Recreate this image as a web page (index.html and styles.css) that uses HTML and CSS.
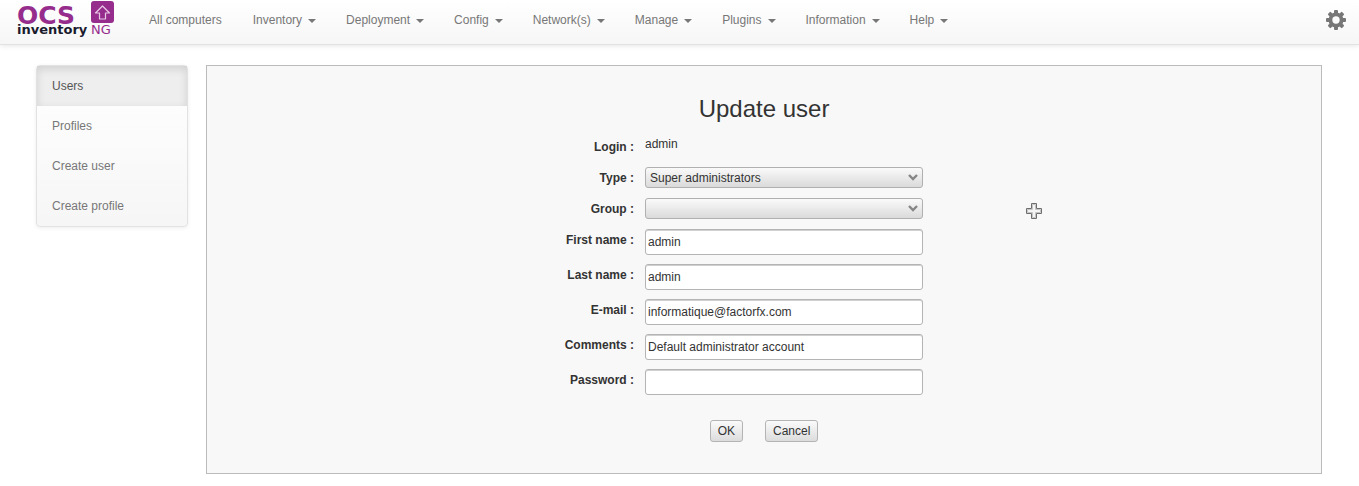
FILE: index.html
```html
<!DOCTYPE html>
<html lang="en">
<head>
<meta charset="utf-8">
<title>OCS Inventory - Update user</title>
<link rel="stylesheet" href="styles.css">
</head>
<body>
<header class="navbar">
  <a class="brand" href="#" aria-label="OCS Inventory NG">
    <svg width="100" height="40" viewBox="0 0 100 40">
      <text class="logo-ocs" x="1" y="24">OCS</text>
      <rect x="75" y="1" width="23" height="22" rx="3" fill="#962d8d"/>
      <path d="M86.500 6l7 7h-4v6h-6v-6h-4z" fill="none" stroke="#e8c9e5" stroke-width="1.200" stroke-linejoin="round"/>
      <text class="logo-inventory" x="1" y="34">inventory</text>
      <text class="logo-ng" x="75" y="34">NG</text>
    </svg>
  </a>
  <nav class="menu">
    <a href="#">All computers</a>
    <a class="drop" href="#">Inventory</a>
    <a class="drop" href="#">Deployment</a>
    <a class="drop" href="#">Config</a>
    <a class="drop" href="#">Network(s)</a>
    <a class="drop" href="#">Manage</a>
    <a class="drop" href="#">Plugins</a>
    <a class="drop" href="#">Information</a>
    <a class="drop" href="#">Help</a>
  </nav>
  <button class="settings" type="button" aria-label="Settings">
    <svg width="20" height="20" viewBox="0 0 20 20">
      <g fill="#777">
        <rect x="8" y="0" width="4" height="20" rx="1"/>
        <rect x="8" y="0" width="4" height="20" rx="1" transform="rotate(45 10 10)"/>
        <rect x="8" y="0" width="4" height="20" rx="1" transform="rotate(90 10 10)"/>
        <rect x="8" y="0" width="4" height="20" rx="1" transform="rotate(135 10 10)"/>
        <circle cx="10" cy="10" r="7.500"/>
      </g>
      <circle cx="10" cy="10" r="3.700" fill="#fbfbfb"/>
    </svg>
  </button>
</header>
<div class="page">
  <nav class="side">
    <a class="active" href="#">Users</a>
    <a href="#">Profiles</a>
    <a href="#">Create user</a>
    <a href="#">Create profile</a>
  </nav>
  <main class="panel">
    <h1>Update user</h1>
    <form class="form">
      <div class="row login"><span class="name">Login :</span><span class="value">admin</span></div>
      <div class="row pick"><label for="type">Type :</label>
        <div class="select"><select id="type"><option>Super administrators</option></select>
          <svg width="10" height="7" viewBox="0 0 10 7"><path d="M1 1l4 4 4-4" fill="none" stroke="#858585" stroke-width="2.400"/></svg></div></div>
      <div class="row pick"><label for="group">Group :</label>
        <div class="select"><select id="group"><option></option></select>
          <svg width="10" height="7" viewBox="0 0 10 7"><path d="M1 1l4 4 4-4" fill="none" stroke="#858585" stroke-width="2.400"/></svg></div></div>
      <div class="row"><label for="first">First name :</label><input id="first" type="text" value="admin"></div>
      <div class="row"><label for="last">Last name :</label><input id="last" type="text" value="admin"></div>
      <div class="row"><label for="email">E-mail :</label><input id="email" type="text" value="informatique@factorfx.com"></div>
      <div class="row"><label for="comments">Comments :</label><input id="comments" type="text" value="Default administrator account"></div>
      <div class="row"><label for="password">Password :</label><input id="password" type="password"></div>
      <div class="actions"><button type="submit">OK</button><button type="button">Cancel</button></div>
    </form>
  </main>
</div>
<svg class="pointer" width="16" height="16" viewBox="0 0 16 16">
  <path d="M5.500 .5h5v5h5v5h-5v5h-5v-5h-5v-5h5z" fill="#fff" stroke="#6e6e6e"/>
  <path d="M6.500 1.500h3v5h5v3h-5v5h-3v-5h-5v-3h5z" fill="#f4f4f4" stroke="#c4c4c4"/>
</svg>
</body>
</html>
```
FILE: styles.css
```css
* { box-sizing: border-box; }

body {
  margin: 0;
  background: #fff;
  color: #333;
  font: 12px/20px "Liberation Sans", Arial, sans-serif;
}

a { color: #777; text-decoration: none; }

.navbar {
  display: flex;
  height: 45px;
  padding: 0 13px 0 16px;
  border-bottom: 1px solid #e2e2e2;
  background: linear-gradient(#fff, #f6f6f6);
  box-shadow: 0 1px 5px rgba(0, 0, 0, 0.1);
}

.brand { width: 118px; }
.brand svg { display: block; }
.logo-ocs { font: bold 25px "DejaVu Sans", sans-serif; fill: #962d8d; }
.logo-inventory { font: bold 13px "DejaVu Sans", sans-serif; fill: #1b1b2f; }
.logo-ng { font: 13px "DejaVu Sans", sans-serif; fill: #962d8d; }

.menu { display: flex; flex: 1; }
.menu a { display: flex; align-items: center; height: 40px; padding: 0 15px; }
.menu a:first-child { padding-right: 16px; }
.drop::after {
  content: "";
  margin: 2px 0 0 6px;
  border: 4px solid transparent;
  border-top-color: #777;
  border-bottom-width: 0;
}

.settings {
  align-self: flex-start;
  height: 40px;
  padding: 0;
  border: 0;
  background: none;
}
.settings svg { display: block; }

.page {
  display: flex;
  align-items: flex-start;
  gap: 18px;
  padding: 20px 37px 12px 36px;
}

.side {
  width: 152px;
  border: 1px solid #e2e2e2;
  border-radius: 4px;
  background: linear-gradient(#fff, #f6f6f6);
  box-shadow: 0 1px 4px rgba(0, 0, 0, 0.07);
}
.side a { display: block; padding: 10px 15px; }
.side .active {
  color: #555;
  background: #eee;
  box-shadow: inset 0 3px 8px rgba(0, 0, 0, 0.125);
}

.panel {
  flex: 1;
  padding: 23px 0 31px;
  border: 1px solid #bbb;
  background: #f8f8f8;
}

h1 {
  margin: 0 0 7px;
  font-size: 24px;
  font-weight: normal;
  line-height: 40px;
  text-align: center;
}

.row {
  display: grid;
  grid-template-columns: 120px 278px;
  column-gap: 10px;
  justify-content: center;
  padding-right: 90px;
  margin-bottom: 9px;
}
.row label, .name { padding: 1px 1px 0 0; font-weight: bold; text-align: right; }
.login { margin-bottom: 10px; }
.value { line-height: 16px; }
.pick { margin-bottom: 10px; }

input, select, button { color: #333; font: inherit; }

input {
  height: 26px;
  padding: 0 2px;
  border: 1px solid #b4b4b4;
  border-radius: 3px;
  background: #fff;
  box-shadow: inset 0 1px 0 #d0d0d0;
}

.select { display: grid; }
.select select {
  grid-area: 1 / 1;
  width: 100%;
  height: 21px;
  padding: 0 4px;
  border: 1px solid #b0b0b0;
  border-radius: 3px;
  appearance: none;
  background: linear-gradient(#fafafa, #dadada);
  line-height: 18px;
}
.select svg {
  grid-area: 1 / 1;
  place-self: center end;
  margin-right: 5px;
  pointer-events: none;
}

.actions {
  display: flex;
  justify-content: center;
  gap: 22px;
  padding-top: 16px;
}
.actions button {
  height: 22px;
  padding: 0 7px;
  border: 1px solid #b4b4b4;
  border-radius: 3px;
  background: linear-gradient(#fafafa, #dcdcdc);
  line-height: 20px;
}

.pointer { position: absolute; left: 1026px; top: 203px; }
```
